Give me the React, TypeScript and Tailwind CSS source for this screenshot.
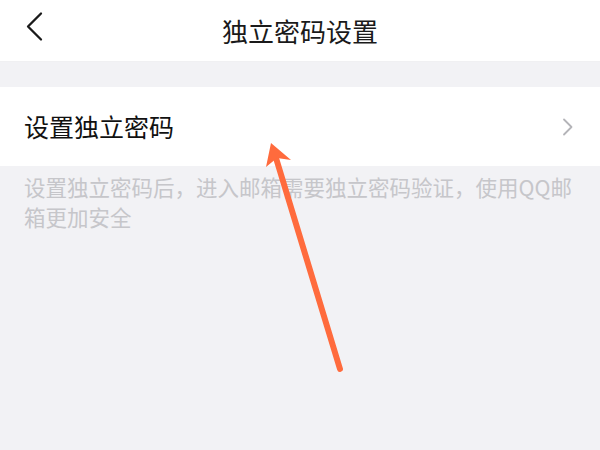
const cjk = { fontFamily: '"Noto Sans CJK SC", "Noto Sans", sans-serif' };

export default function App() {
  return (
    <div className="relative h-[450px] w-[600px] overflow-hidden bg-[#f2f2f5]" style={cjk}>
      {/* Header */}
      <div className="relative flex h-[62px] items-center justify-center border-b border-[#f0f0f2] bg-white">
        <button type="button" className="absolute left-[22px] top-[10px] text-[#1a1a1a]">
          <svg width="26" height="32" viewBox="0 0 26 32" fill="none">
            <path d="M19 3.5 L6 16.5 L19 29.5" stroke="currentColor" strokeWidth="2.3" strokeLinecap="round" strokeLinejoin="round" />
          </svg>
        </button>
        <h1 className="text-[26px] leading-none text-[#1a1a1a]">独立密码设置</h1>
      </div>

      {/* Row */}
      <div className="mt-[25px] flex h-[79px] items-center justify-between bg-white pl-[24px] pr-[26px]">
        <span className="text-[25px] leading-none text-[#111]">设置独立密码</span>
        <svg width="12" height="18" viewBox="0 0 12 18" fill="none" className="text-[#b4b4b8]">
          <path d="M2 1.5 L9.5 9 L2 16.5" stroke="currentColor" strokeWidth="1.8" strokeLinecap="round" strokeLinejoin="round" />
        </svg>
      </div>

      <p className="pl-[24px] pr-[14px] pt-[6px] text-[21.5px] leading-[30px] text-[#c6c6ca]">
        设置独立密码后，进入邮箱需要独立密码验证，使用QQ邮箱更加安全
      </p>

      {/* Annotation arrow */}
      <svg className="pointer-events-none absolute left-0 top-0" width="600" height="450" viewBox="0 0 600 450">
        <line x1="276" y1="158" x2="340" y2="369" stroke="#ff6b3d" strokeWidth="6" strokeLinecap="round" />
        <polygon points="271,143 291,160 277,158 266,167" fill="#ff6b3d" />
      </svg>
    </div>
  );
}
